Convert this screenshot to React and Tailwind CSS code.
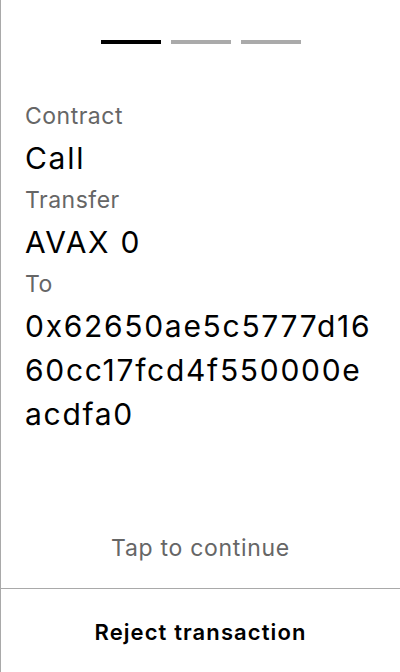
export default function App() {
  const rows = [
    { label: "Contract", value: "Call" },
    { label: "Transfer", value: "AVAX 0" },
    { label: "To", value: "0x62650ae5c5777d1660cc17fcd4f550000eacdfa0" },
  ];

  return (
    <div
      className="flex h-[672px] w-[400px] flex-col border-l border-[#a9a9a9] bg-white text-black"
      style={{ fontFamily: "Inter, 'Noto Sans', sans-serif" }}
    >
      <div className="flex justify-center gap-[10px] pt-[40px]">
        <div className="h-[4px] w-[60px] bg-black" />
        <div className="h-[4px] w-[60px] bg-[#aaaaaa]" />
        <div className="h-[4px] w-[60px] bg-[#aaaaaa]" />
      </div>

      <div className="mt-[52px] pl-[24px] pr-[25px]">
        {rows.map((row) => (
          <div key={row.label}>
            <div className="text-[23px] leading-[40px] tracking-[0.5px] text-[#666666]">{row.label}</div>
            <div className="break-all text-[30px] leading-[44px] tracking-[1.7px]">{row.value}</div>
          </div>
        ))}
      </div>

      <div className="flex-1" />

      <div className="pb-[20px] text-center text-[23px] leading-[40px] tracking-[0.7px] text-[#666666]">
        Tap to continue
      </div>
      <button className="h-[84px] w-full border-t border-[#a9a9a9] pt-[3px] text-[22px] font-semibold tracking-[1.1px]">
        Reject transaction
      </button>
    </div>
  );
}
